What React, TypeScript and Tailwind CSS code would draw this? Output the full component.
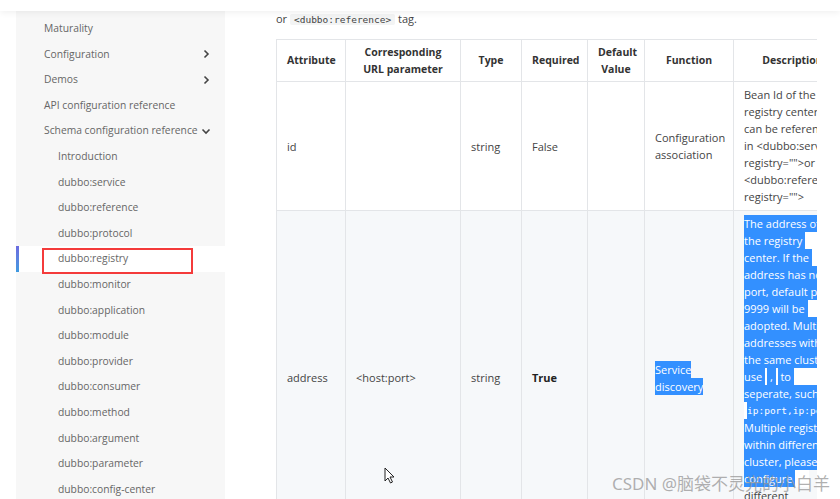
import React from "react";

const font = { fontFamily: '"Open Sans", "Noto Sans CJK SC", sans-serif' };

type NavItem = { label: string; sub?: boolean; chevron?: "right" | "down"; active?: boolean };

const nav: NavItem[] = [
  { label: "Maturality" },
  { label: "Configuration", chevron: "right" },
  { label: "Demos", chevron: "right" },
  { label: "API configuration reference" },
  { label: "Schema configuration reference", chevron: "down" },
  { label: "Introduction", sub: true },
  { label: "dubbo:service", sub: true },
  { label: "dubbo:reference", sub: true },
  { label: "dubbo:protocol", sub: true },
  { label: "dubbo:registry", sub: true, active: true },
  { label: "dubbo:monitor", sub: true },
  { label: "dubbo:application", sub: true },
  { label: "dubbo:module", sub: true },
  { label: "dubbo:provider", sub: true },
  { label: "dubbo:consumer", sub: true },
  { label: "dubbo:method", sub: true },
  { label: "dubbo:argument", sub: true },
  { label: "dubbo:parameter", sub: true },
  { label: "dubbo:config-center", sub: true },
];

const Chevron = ({ dir }: { dir: "right" | "down" }) => (
  <svg width="10" height="10" viewBox="0 0 10 10" className="shrink-0 text-[#444]">
    {dir === "right" ? (
      <polyline points="3.5,1.5 7,5 3.5,8.5" fill="none" stroke="currentColor" strokeWidth="1.6" />
    ) : (
      <polyline points="1.5,3.5 5,7 8.5,3.5" fill="none" stroke="currentColor" strokeWidth="1.6" />
    )}
  </svg>
);

const Sidebar = () => (
  <aside className="w-[209px] shrink-0 bg-[#f7f7f7] pt-[5px]">
    {nav.map((item) => (
      <div
        key={item.label}
        className={`relative flex h-[25.6px] items-center pr-[14px] text-[10.3px] text-[#666] ${
          item.sub ? "pl-[42px]" : "pl-[28px]"
        } ${item.active ? "bg-white" : ""}`}
      >
        {item.active && (
          <>
            <span className="absolute left-0 top-0 h-full w-[3px] bg-gradient-to-b from-[#6b6be0] to-[#3d9ae0]" />
            <span className="absolute left-[26px] top-[2px] h-[26px] w-[151px] border-2 border-[#f43b3b]" />
          </>
        )}
        <span className="flex-1 whitespace-nowrap">{item.label}</span>
        {item.chevron && <Chevron dir={item.chevron} />}
      </div>
    ))}
  </aside>
);

const Sel = ({ children, mono }: { children: React.ReactNode; mono?: boolean }) => (
  <span
    className={`block h-[17px] whitespace-pre bg-[#3390ff] leading-[17px] text-white ${mono ? "text-[9.5px]" : ""}`}
    style={mono ? { fontFamily: '"DejaVu Sans Mono", monospace' } : undefined}
  >
    {children}
  </span>
);

const Gap = ({ w }: { w: string }) => <span className={`block h-[17px] shrink-0 bg-white ${w}`} />;

const descLines: React.ReactNode[] = [
  <Sel>The address of</Sel>,
  <><Sel>the registry </Sel><Gap w="w-[16px]" /></>,
  <><Sel>center. If the </Sel><Gap w="w-[10px]" /></>,
  <Sel>address has no</Sel>,
  <Sel>port, default port</Sel>,
  <><Sel>9999 will be </Sel><Gap w="w-[14px]" /></>,
  <Sel>adopted. Multiple</Sel>,
  <Sel>addresses within</Sel>,
  <Sel>the same cluster</Sel>,
  <>
    <Sel>use </Sel>
    <Gap w="w-[2px]" />
    <Sel> , </Sel>
    <Gap w="w-[2px]" />
    <Sel> to </Sel>
    <Gap w="w-[30px]" />
  </>,
  <Sel>seperate, such as</Sel>,
  <><Gap w="w-[3px]" /><Sel mono>ip:port,ip:port</Sel></>,
  <Sel>Multiple registries</Sel>,
  <Sel>within different</Sel>,
  <Sel>cluster, please</Sel>,
  <><Sel>configure </Sel><Gap w="w-[14px]" /></>,
  <span className="block leading-[17px]">different</span>,
  <span className="block leading-[17px]">registries,</span>,
];

const Th = ({ children, w }: { children: React.ReactNode; w: string }) => (
  <th className={`${w} border border-[#e3e5e8] px-[10px] text-center text-[10.5px] font-bold leading-[17px] text-[#333]`}>
    {children}
  </th>
);

const Td = ({ children, bold }: { children?: React.ReactNode; bold?: boolean }) => (
  <td className={`border border-[#e3e5e8] px-[10px] align-middle text-[11px] leading-[17px] ${bold ? "font-bold text-[#222]" : "text-[#444]"}`}>
    {children}
  </td>
);

const Cursor = () => (
  <svg className="absolute left-[384px] top-[467px]" width="11" height="17" viewBox="0 0 11 17">
    <path d="M1 1 L1 14 L4 11 L6.5 16 L8.5 15 L6 10 L10 10 Z" fill="white" stroke="#222" strokeWidth="1" strokeLinejoin="round" />
  </svg>
);

export default function App() {
  return (
    <div className="relative h-[499px] w-[840px] overflow-hidden bg-white" style={font}>
      <div className="relative z-10 h-[11px] bg-white shadow-[0_2px_6px_rgba(0,0,0,0.06)]" />
      <div className="flex">
        <div className="w-[16px] shrink-0" />
        <Sidebar />
        <main className="w-[592px] shrink-0 overflow-hidden pl-[51px] pt-[1px]">
          <p className="text-[11px] leading-[14px] text-[#444]">
            or{" "}
            <code className="rounded-[2px] bg-[#f3f4f4] px-[4px] text-[9.5px]" style={{ fontFamily: '"DejaVu Sans Mono", monospace' }}>
              &lt;dubbo:reference&gt;
            </code>{" "}
            tag.
          </p>
          <table className="mt-[12px] w-[575px] table-fixed border-collapse">
            <thead>
              <tr className="h-[42px]">
                <Th w="w-[69px]">Attribute</Th>
                <Th w="w-[115px]">Corresponding URL parameter</Th>
                <Th w="w-[61px]">Type</Th>
                <Th w="w-[66px]">Required</Th>
                <Th w="w-[57px]">Default Value</Th>
                <Th w="w-[89px]">Function</Th>
                <Th w="w-[118px]">Description</Th>
              </tr>
            </thead>
            <tbody>
              <tr className="h-[129px] bg-white">
                <Td>id</Td>
                <Td />
                <Td>string</Td>
                <Td>False</Td>
                <Td />
                <Td>Configuration association</Td>
                <Td>
                  <div className="-mt-[2px] w-[74px] whitespace-nowrap">
                    Bean Id of the<br />registry center,<br />can be referenced<br />in &lt;dubbo:service<br />registry=""&gt;or<br />&lt;dubbo:reference<br />registry=""&gt;
                  </div>
                </Td>
              </tr>
              <tr className="h-[334px] bg-[#f6f8fa]">
                <Td>address</Td>
                <Td>&lt;host:port&gt;</Td>
                <Td>string</Td>
                <Td bold>True</Td>
                <Td />
                <Td>
                  <div className="flex"><Sel>Service</Sel></div>
                  <div className="flex"><Sel>discovery</Sel></div>
                </Td>
                <td className="border border-[#e3e5e8] px-[10px] pt-[4px] align-top text-[11px] leading-[17px] text-[#444]">
                  {descLines.map((l, i) => (
                    <div key={i} className="flex h-[17px] whitespace-nowrap">{l}</div>
                  ))}
                </td>
              </tr>
            </tbody>
          </table>
        </main>
      </div>
      <Cursor />
      <div
        className="absolute left-[612px] top-[471px] whitespace-nowrap text-[17px] text-[rgba(150,150,150,0.75)]"
        style={{ fontFamily: '"Noto Sans", "Noto Sans CJK SC", sans-serif' }}
      >
        CSDN @脑袋不灵光的小白羊
      </div>
    </div>
  );
}
